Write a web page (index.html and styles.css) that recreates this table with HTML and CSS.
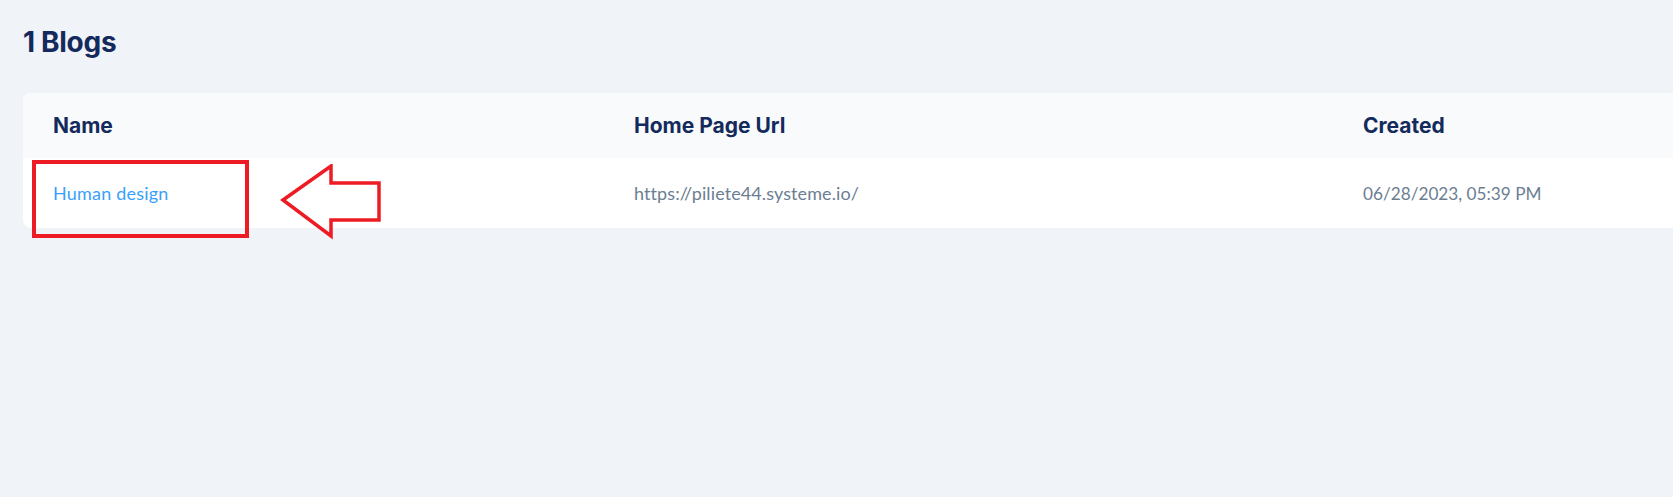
FILE: index.html
```html
<!DOCTYPE html>
<html lang="en">
<head>
    <meta charset="UTF-8">
    <meta name="viewport" content="width=device-width, initial-scale=1.0">
    <title>Blogs</title>
    <link rel="stylesheet" href="styles.css">
</head>
<body>
<div class="page">
    <h1 class="title">1 Blogs</h1>
    <div class="card">
        <div class="row head">
            <div class="cell">Name</div>
            <div class="cell">Home Page Url</div>
            <div class="cell">Created</div>
        </div>
        <div class="row">
            <div class="cell"><a class="blog-link" href="#">Human design</a></div>
            <div class="cell muted url">https://piliete44.systeme.io/</div>
            <div class="cell muted">06/28/2023, 05:39 PM</div>
        </div>
    </div>
    <!-- annotation drawn over the table -->
    <div class="mark-box"></div>
    <svg class="mark-arrow" width="110" height="80" viewBox="0 0 110 80">
        <polygon points="5,36 53,2 53,19 101,19 101,56 53,56 53,72" fill="none" stroke="#ed1c24" stroke-width="3.5" stroke-linejoin="miter"/>
    </svg>
</div>
</body>
</html>
```

FILE: styles.css
```css
body {
    margin: 0;
    padding: 0;
    background-color: #f0f3f8;
    font-family: Lato, "Open Sans", sans-serif;
    overflow: hidden;
}
.page {
    position: relative;
    padding: 25px 0 0 23px;
    height: 497px;
    box-sizing: border-box;
}
.title {
    font-family: Inter, "Noto Sans", sans-serif;
    font-size: 28px;
    font-weight: 700;
    color: #142a5c;
    margin: 0 0 34px;
    line-height: 34px;
    letter-spacing: -0.3px;
}
.card {
    width: 1700px;
    background-color: #ffffff;
    border-radius: 8px 0 0 8px;
    overflow: hidden;
}
.row {
    display: grid;
    grid-template-columns: 581px 729px 1fr;
    height: 70px;
    align-items: center;
}
.row.head {
    height: 65px;
    background-color: #f8fafc;
}
.cell {
    padding-left: 30px;
}
.head .cell {
    font-family: Inter, "Noto Sans", sans-serif;
    font-size: 21px;
    font-weight: 700;
    color: #142a5c;
}
.blog-link {
    color: #3a9ffc;
    text-decoration: none;
    font-size: 18px;
    letter-spacing: 0.2px;
}
.muted {
    color: #6c7e92;
    font-size: 17.2px;
}
.muted.url {
    font-size: 18px;
    letter-spacing: 0.1px;
}
.mark-box {
    position: absolute;
    left: 32px;
    top: 160px;
    width: 217px;
    height: 78px;
    border: 4px solid #ed1c24;
    box-sizing: border-box;
}
.mark-arrow {
    position: absolute;
    left: 278px;
    top: 164px;
}
```
